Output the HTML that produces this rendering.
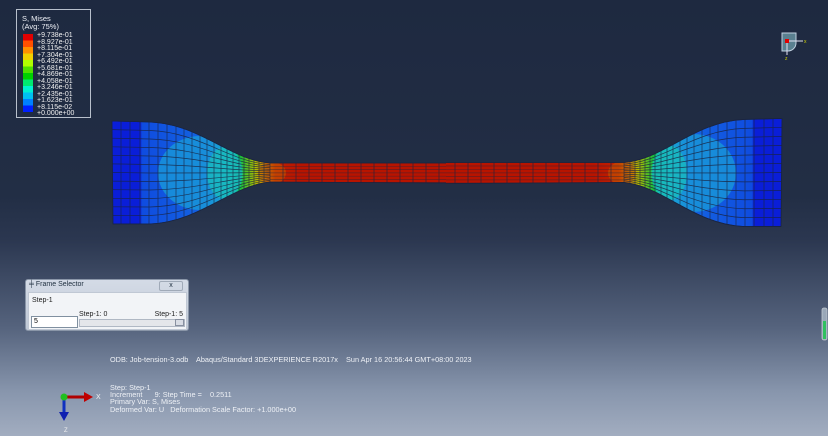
<!DOCTYPE html>
<html><head><meta charset="utf-8"><style>
html,body{margin:0;padding:0}
body{width:828px;height:436px;overflow:hidden;position:relative;font-family:"Liberation Sans",sans-serif;
background:linear-gradient(to bottom,#1e2940 0%,#222e45 45%,#2b3750 55%,#55637d 75%,#8896ad 90%,#a2adc0 100%);}
.t{position:absolute;color:#eef1f6;font-size:7.3px;line-height:7.2px;white-space:pre}
#leg{position:absolute;left:16px;top:9px;width:73px;height:107px;border:1px solid #b8c0cc;}
#fs{position:absolute;left:25px;top:279px;width:162px;height:50px;border:1px solid #8a96a8;background:linear-gradient(#d4dbe6,#bfc8d6);border-radius:3px}
</style></head><body>
<div id="leg"></div>
<div class="t" style="left:22px;top:15px;font-size:7.5px;line-height:8px">S, Mises
(Avg: 75%)</div>
<svg style="position:absolute;left:0;top:0" width="828" height="436">
<g>
<rect x="23" y="34" width="10" height="6.5" fill="#e00000"/>
<rect x="23" y="40.5" width="10" height="6.5" fill="#ff5000"/>
<rect x="23" y="47" width="10" height="6.5" fill="#ff9000"/>
<rect x="23" y="53.5" width="10" height="6.5" fill="#f0d000"/>
<rect x="23" y="60" width="10" height="6.5" fill="#b0ff00"/>
<rect x="23" y="66.5" width="10" height="6.5" fill="#50e000"/>
<rect x="23" y="73" width="10" height="6.5" fill="#00d000"/>
<rect x="23" y="79.5" width="10" height="6.5" fill="#00e870"/>
<rect x="23" y="86" width="10" height="6.5" fill="#00f0d0"/>
<rect x="23" y="92.5" width="10" height="6.5" fill="#00c0f0"/>
<rect x="23" y="99" width="10" height="6.5" fill="#0080ff"/>
<rect x="23" y="105.5" width="10" height="6.5" fill="#0020ff"/>
</g>
<defs>
<clipPath id="cl"><path d="M112,121 L150,122 C200,124 230,160 270,163 L448,163 L448,183 L270,182 C230,186 200,222 150,224 L113,224 Z"/></clipPath>
<linearGradient id="gf" x1="112" x2="300" y1="0" y2="0" gradientUnits="userSpaceOnUse">
<stop offset="0" stop-color="#0a1ed8"/><stop offset="0.15" stop-color="#0a1ed8"/><stop offset="0.16" stop-color="#0f4ce0"/>
<stop offset="0.5" stop-color="#1464e0"/><stop offset="0.6" stop-color="#14b8c8"/><stop offset="0.68" stop-color="#10c040"/>
<stop offset="0.76" stop-color="#b0c000"/><stop offset="0.81" stop-color="#d08000"/><stop offset="0.87" stop-color="#c02000"/><stop offset="1" stop-color="#b81400"/>
</linearGradient>
<g id="half">
<g clip-path="url(#cl)">
<rect x="112" y="110" width="340" height="130" fill="url(#gf)"/>
<ellipse cx="200" cy="173" rx="42" ry="37" fill="#1a9cd8" opacity="0.75"/>
<ellipse cx="225" cy="173" rx="18" ry="26" fill="#18d0b0" opacity="0.5"/>
<ellipse cx="272" cy="173" rx="14" ry="11" fill="#c86000" opacity="0.5"/>
<g stroke="#1a2440" stroke-width="0.7" fill="none" opacity="0.85">
<path d="M112,121 L150,122 C200,124 230,160 270,163"/>
<path d="M112,129.6 L150,130.5 C200,132.2 230,162.2 270,164.6"/>
<path d="M112,138.2 L150,139 C200,140.3 230,164.3 270,166.2"/>
<path d="M112,146.8 L150,147.5 C200,148.5 230,166.5 270,167.75"/>
<path d="M112,155.3 L150,156 C200,156.7 230,168.7 270,169.3"/>
<path d="M112,163.9 L150,164.5 C200,164.8 230,170.8 270,170.9"/>
<path d="M112,172.5 L150,173 C200,173 230,173 270,172.5"/>
<path d="M112,181.1 L150,181.5 C200,181.2 230,175.2 270,174.1"/>
<path d="M112,189.7 L150,190 C200,189.3 230,177.3 270,175.7"/>
<path d="M112,198.3 L150,198.5 C200,197.5 230,179.5 270,177.3"/>
<path d="M112,206.8 L150,207 C200,205.7 230,181.7 270,178.8"/>
<path d="M112,215.4 L150,215.5 C200,213.8 230,183.8 270,180.4"/>
<path d="M112,224 L150,224 C200,222 230,186 270,182"/>
<path d="M270,163H448M270,166.3H448M270,169.6H448M270,172.9H448M270,176.2H448M270,179.5H448M270,182.5H448" opacity="0.6"/>
<path d="M121,118V228M130,118V228M140,118V228M149,118V228M158,118V228M167,118V228M176,118V228M184,118V228M192,118V228M200,118V228M207,118V228M214,118V228M221,118V228M227,118V228M233,118V228M239,118V228M244,118V228M249,118V228M254,118V228M259,118V228M264,118V228M270,118V228M283,150V190M296,150V190M309,150V190M322,150V190M335,150V190M348,150V190M361,150V190M374,150V190M387,150V190M400,150V190M413,150V190M426,150V190M439,150V190"/>
</g>
</g>
<path d="M448,163 L270,163 C230,160 200,124 150,122 L112,121 L113,224 L150,224 C200,222 230,186 270,182 L448,183" fill="none" stroke="#1a2440" stroke-width="0.8"/>
</g>
</defs>
<use href="#half"/>
<g transform="translate(0,173) scale(1,1.05) translate(0,-173)"><use href="#half" transform="translate(894,0) scale(-1,1)"/></g>
<!-- view cube -->
<path d="M782,33 h14 v10 a8,8 0 0 1 -8,8 h-6 z" fill="#5a8090" stroke="#c0d0e0" stroke-width="1"/>
<line x1="787" y1="41" x2="787" y2="55" stroke="#e0e0f0" stroke-width="1"/>
<line x1="787" y1="41" x2="803" y2="41" stroke="#e0e0f0" stroke-width="1"/>
<rect x="785" y="39" width="4" height="4" fill="#e00000"/>
<text x="804" y="43" font-size="5" fill="#d0d000" font-family="Liberation Sans">x</text>
<text x="785" y="60" font-size="5" fill="#d0d000" font-family="Liberation Sans">z</text>
<!-- triad -->
<line x1="64" y1="397" x2="86" y2="397" stroke="#b00000" stroke-width="3"/>
<path d="M84,392 L93,397 L84,402 Z" fill="#c00000"/>
<line x1="64" y1="397" x2="64" y2="414" stroke="#1030c0" stroke-width="3"/>
<path d="M59,412 L64,421 L69,412 Z" fill="#1020b0"/>
<circle cx="64" cy="397" r="3.5" fill="#20c020"/>
<text x="96" y="399" font-size="7" fill="#f0f0f0" font-family="Liberation Sans">X</text>
<text x="64" y="432" font-size="6" fill="#f0f0f0" font-family="Liberation Sans">Z</text>
<!-- slider right -->
<rect x="822" y="308" width="5" height="32" rx="2" fill="#9aa8b8" stroke="#c0c8d0" stroke-width="0.8"/>
<rect x="823" y="321" width="3" height="18" fill="#30c060"/>
</svg>
<div class="t" style="left:37px;top:33px;font-size:7px;line-height:6.5px;color:#f0f0f0">+9.738e-01
+8.927e-01
+8.115e-01
+7.304e-01
+6.492e-01
+5.681e-01
+4.869e-01
+4.058e-01
+3.246e-01
+2.435e-01
+1.623e-01
+8.115e-02
+0.000e+00</div>
<div id="fs">
<div style="position:absolute;left:3px;top:1px;font-size:7px;color:#203040">╪ Frame Selector</div>
<div style="position:absolute;right:5px;top:1px;width:22px;height:8px;border:1px solid #a0aab8;border-radius:2px;font-size:7px;text-align:center;line-height:8px;color:#203040">x</div>
<div style="position:absolute;left:2px;top:12px;width:157px;height:36px;background:#f2f4f7;border:1px solid #c0c8d4">
<div style="position:absolute;left:3px;top:4px;font-size:7px;color:#202020">Step-1</div>
<div style="position:absolute;left:50px;top:18px;font-size:7px;color:#202020">Step-1: 0</div>
<div style="position:absolute;right:3px;top:18px;font-size:7px;color:#202020">Step-1: 5</div>
<div style="position:absolute;left:2px;top:23px;width:43px;height:10px;background:#fff;border:1px solid #8090a0;font-size:7px;line-height:10px;padding-left:2px">5</div>
<div style="position:absolute;left:50px;top:26px;width:104px;height:6px;background:#e4e6ea;border:1px solid #b0b8c4"></div>
<div style="position:absolute;left:146px;top:26px;width:7px;height:5px;background:#d8dce4;border:1px solid #8890a0"></div>
</div></div>
<div class="t" style="left:110px;top:356px">ODB: Job-tension-3.odb    Abaqus/Standard 3DEXPERIENCE R2017x    Sun Apr 16 20:56:44 GMT+08:00 2023</div>
<div class="t" style="left:110px;top:384px">Step: Step-1
Increment      9: Step Time =    0.2511
Primary Var: S, Mises
Deformed Var: U   Deformation Scale Factor: +1.000e+00</div>
</body></html>
